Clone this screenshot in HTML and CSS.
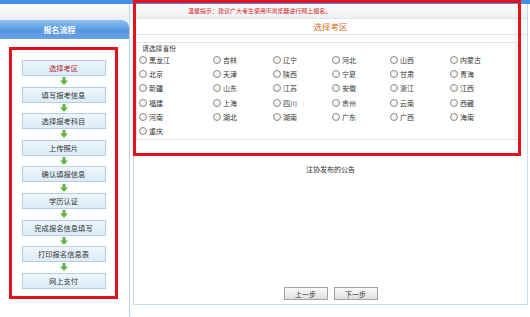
FILE: index.html
```html
<!DOCTYPE html>
<html lang="zh">
  <head>
    <meta charset="utf-8" />
    <title>选择考区</title>
    <link rel="stylesheet" href="styles.css">
  </head>
  <body>
    <div class="topbar"></div>
    <div class="main">
      <div class="side">
        <div class="side-top"></div>
        <div class="side-title">报名流程</div>
        <div class="steps">
          <div class="step step-current">选择考区</div>
          <div class="arrow"><svg width="8" height="8" viewBox="0 0 8 8"><rect x="2.5" y="0" width="3" height="4" fill="#5cb543"/><path d="M0 3.5 H8 L4 8 Z" fill="#5cb543"/></svg></div>
          <div class="step">填写报考信息</div>
          <div class="arrow"><svg width="8" height="8" viewBox="0 0 8 8"><rect x="2.5" y="0" width="3" height="4" fill="#5cb543"/><path d="M0 3.5 H8 L4 8 Z" fill="#5cb543"/></svg></div>
          <div class="step">选择报考科目</div>
          <div class="arrow"><svg width="8" height="8" viewBox="0 0 8 8"><rect x="2.5" y="0" width="3" height="4" fill="#5cb543"/><path d="M0 3.5 H8 L4 8 Z" fill="#5cb543"/></svg></div>
          <div class="step">上传照片</div>
          <div class="arrow"><svg width="8" height="8" viewBox="0 0 8 8"><rect x="2.5" y="0" width="3" height="4" fill="#5cb543"/><path d="M0 3.5 H8 L4 8 Z" fill="#5cb543"/></svg></div>
          <div class="step">确认填报信息</div>
          <div class="arrow"><svg width="8" height="8" viewBox="0 0 8 8"><rect x="2.5" y="0" width="3" height="4" fill="#5cb543"/><path d="M0 3.5 H8 L4 8 Z" fill="#5cb543"/></svg></div>
          <div class="step">学历认证</div>
          <div class="arrow"><svg width="8" height="8" viewBox="0 0 8 8"><rect x="2.5" y="0" width="3" height="4" fill="#5cb543"/><path d="M0 3.5 H8 L4 8 Z" fill="#5cb543"/></svg></div>
          <div class="step">完成报名信息填写</div>
          <div class="arrow"><svg width="8" height="8" viewBox="0 0 8 8"><rect x="2.5" y="0" width="3" height="4" fill="#5cb543"/><path d="M0 3.5 H8 L4 8 Z" fill="#5cb543"/></svg></div>
          <div class="step">打印报名信息表</div>
          <div class="arrow"><svg width="8" height="8" viewBox="0 0 8 8"><rect x="2.5" y="0" width="3" height="4" fill="#5cb543"/><path d="M0 3.5 H8 L4 8 Z" fill="#5cb543"/></svg></div>
          <div class="step">网上支付</div>
        </div>
      </div>

      <div class="panel">
        <div class="tip">温馨提示：建议广大考生使用IE浏览器进行网上报名。</div>
        <div class="title">选择考区</div>
        <div class="province-box">
          <div class="province-label">请选择省份</div>
          <div class="provinces">
            <label class="prov"><input type="radio" name="p">黑龙江</label>
            <label class="prov"><input type="radio" name="p">吉林</label>
            <label class="prov"><input type="radio" name="p">辽宁</label>
            <label class="prov"><input type="radio" name="p">河北</label>
            <label class="prov"><input type="radio" name="p">山西</label>
            <label class="prov"><input type="radio" name="p">内蒙古</label>
            <label class="prov"><input type="radio" name="p">北京</label>
            <label class="prov"><input type="radio" name="p">天津</label>
            <label class="prov"><input type="radio" name="p">陕西</label>
            <label class="prov"><input type="radio" name="p">宁夏</label>
            <label class="prov"><input type="radio" name="p">甘肃</label>
            <label class="prov"><input type="radio" name="p">青海</label>
            <label class="prov"><input type="radio" name="p">新疆</label>
            <label class="prov"><input type="radio" name="p">山东</label>
            <label class="prov"><input type="radio" name="p">江苏</label>
            <label class="prov"><input type="radio" name="p">安徽</label>
            <label class="prov"><input type="radio" name="p">浙江</label>
            <label class="prov"><input type="radio" name="p">江西</label>
            <label class="prov"><input type="radio" name="p">福建</label>
            <label class="prov"><input type="radio" name="p">上海</label>
            <label class="prov"><input type="radio" name="p">四川</label>
            <label class="prov"><input type="radio" name="p">贵州</label>
            <label class="prov"><input type="radio" name="p">云南</label>
            <label class="prov"><input type="radio" name="p">西藏</label>
            <label class="prov"><input type="radio" name="p">河南</label>
            <label class="prov"><input type="radio" name="p">湖北</label>
            <label class="prov"><input type="radio" name="p">湖南</label>
            <label class="prov"><input type="radio" name="p">广东</label>
            <label class="prov"><input type="radio" name="p">广西</label>
            <label class="prov"><input type="radio" name="p">海南</label>
            <label class="prov"><input type="radio" name="p">重庆</label>
          </div>
        </div>
        <div class="notice">注协发布的公告</div>
        <div class="buttons">
          <button class="btn">上一步</button>
          <button class="btn">下一步</button>
        </div>
      </div>
    </div>

    <!-- 标注红框 -->
    <div class="mark mark-side"></div>
    <div class="mark mark-panel"></div>
  </body>
</html>
```

FILE: styles.css
```css
html {
  height: 100%;
}

body {
  margin: 0;
  height: 100%;
  width: 530px;
  background: white;
  font-family: "Noto Sans CJK SC", "Liberation Sans", sans-serif;
  font-size: 7px;
  color: #333;
  position: relative;
  overflow: hidden;
}

.topbar {
  height: 4px;
  background: #3f8fe4;
}

.main {
  display: flex;
  height: 313px;
}

.side {
  width: 129px;
  border-right: 1px solid #bcd4ea;
  display: flex;
  flex-direction: column;
}

.side-top {
  height: 16px;
  background: linear-gradient(#fbfbfb, #eceff3);
}

.side-title {
  height: 19px;
  line-height: 19px;
  padding-right: 10px;
  text-align: center;
  color: white;
  font-weight: bold;
  font-size: 8px;
  border-radius: 0 7px 0 0;
  background: linear-gradient(#92c2f2, #5597e2 55%, #66a3e7);
}

.steps {
  margin-top: 21px;
  display: flex;
  flex-direction: column;
  align-items: center;
  padding-right: 2px;
}

.step {
  width: 82px;
  height: 14px;
  line-height: 14px;
  text-align: center;
  background: linear-gradient(#eef6fc, #dcecf8);
  border: 1px solid #b3cfe7;
  font-size: 7.3px;
  color: #333;
}

.step-current {
  color: #b3262b;
}

.arrow {
  height: 10.6px;
  display: flex;
  align-items: center;
  justify-content: center;
}

.arrow svg {
  display: block;
}

.panel {
  margin-left: 3px;
  width: 393px;
  height: 300px;
  border: 1px solid #c8dcee;
  border-top: none;
  display: flex;
  flex-direction: column;
}

.tip {
  height: 14px;
  line-height: 14px;
  padding-left: 54px;
  font-size: 6px;
  color: #d9191f;
  background: linear-gradient(#fdfdfd, #eef1f4);
  border-bottom: 1px solid #dde5ee;
}

.title {
  height: 15px;
  line-height: 15px;
  text-align: center;
  font-size: 8.5px;
  color: #d26a1c;
  border-bottom: 1px solid #dde5ee;
}

.province-box {
  margin: 7px 10px 0 2px;
  height: 95px;
  border: 1px solid #dfe7f0;
  border-right-color: #e8eef4;
  padding: 1px 0 0 2px;
}

.province-label {
  margin-left: 3px;
  height: 9px;
  line-height: 9px;
  font-size: 6.8px;
}

.provinces {
  display: grid;
  grid-template-columns: 74px 60px 59px 58px 60px 1fr;
  grid-auto-rows: 14.2px;
  align-items: center;
}

.prov {
  display: flex;
  align-items: center;
  gap: 2px;
  font-size: 7px;
}

.prov input {
  appearance: none;
  margin: 0;
  width: 8px;
  height: 8px;
  border: 1px solid #8a8a8a;
  border-radius: 50%;
  background: radial-gradient(circle at 40% 35%, #fff, #e6e6e6);
}

.notice {
  margin-top: 24px;
  text-align: center;
  font-size: 7px;
}

.buttons {
  margin-top: auto;
  margin-bottom: 4px;
  display: flex;
  justify-content: center;
  gap: 6px;
}

.btn {
  width: 44px;
  height: 13px;
  padding: 0;
  font-family: inherit;
  font-size: 7px;
  color: #333;
  border: 1px solid #a3a3a3;
  border-radius: 0;
  background: linear-gradient(#fafafa, #dedede);
}

.mark {
  position: absolute;
  border: 3px solid #e3121b;
  box-sizing: border-box;
}

.mark-side {
  left: 9px;
  top: 47px;
  width: 109px;
  height: 252px;
}

.mark-panel {
  left: 133px;
  top: 0;
  width: 388px;
  height: 156px;
}
```
